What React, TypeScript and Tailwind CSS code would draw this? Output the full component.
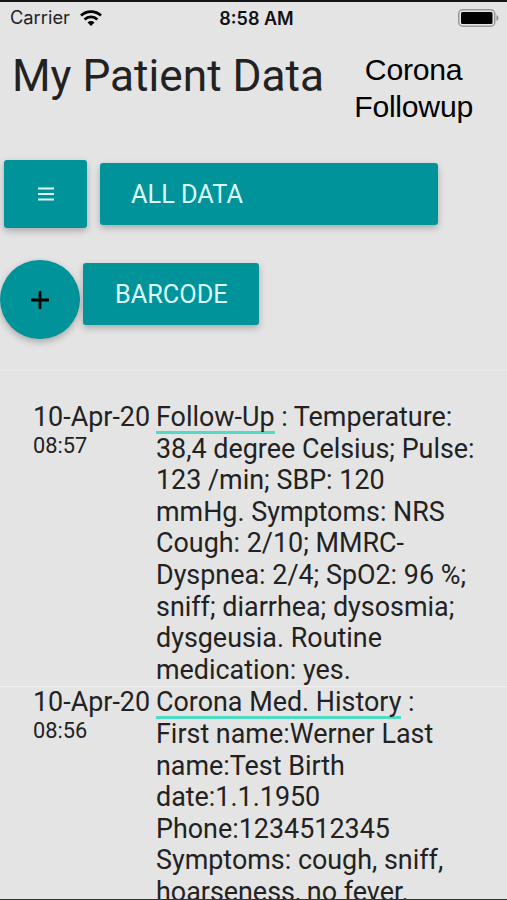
import type { ReactNode } from "react";

type Entry = {
  date: string;
  time: string;
  title: string;
  lines: readonly string[];
};

const entries: readonly Entry[] = [
  {
    date: "10-Apr-20",
    time: "08:57",
    title: "Follow-Up",
    lines: [
      ": Temperature:",
      "38,4 degree Celsius; Pulse:",
      "123 /min; SBP: 120",
      "mmHg. Symptoms: NRS",
      "Cough: 2/10; MMRC-",
      "Dyspnea: 2/4; SpO2: 96 %;",
      "sniff; diarrhea; dysosmia;",
      "dysgeusia. Routine",
      "medication: yes."
    ]
  },
  {
    date: "10-Apr-20",
    time: "08:56",
    title: "Corona Med. History",
    lines: [
      ":",
      "First name:Werner Last",
      "name:Test Birth",
      "date:1.1.1950",
      "Phone:1234512345",
      "Symptoms: cough, sniff,",
      "hoarseness, no fever."
    ]
  }
];

function StatusBar() {
  return (
    <div className="grid h-[36px] shrink-0 grid-cols-3 items-center border-t-2 border-[#151515] pr-[8px] pb-[2px] pl-[10px] font-[Inter,sans-serif] text-[18px] text-[#111]">
      <div className="flex items-center gap-[10px]">
        <span className="text-[18.3px] text-[#222]">Carrier</span>
        <svg width="22" height="16" viewBox="0 0 22 16" aria-hidden="true">
          <path
            d="M1 5.600a14.500 14.500 0 0 1 20 0M4.600 9.400a9.300 9.300 0 0 1 12.800 0"
            fill="none"
            stroke="#000"
            strokeWidth="2.800"
          />
          <path d="M11 16l-3.500-3.600a5 5 0 0 1 7 0z" fill="#000" />
        </svg>
      </div>
      <span className="pl-1 text-center font-semibold">8:58 AM</span>
      <svg className="justify-self-end" width="41" height="18" viewBox="0 0 41 18" aria-hidden="true">
        <rect x="0.750" y="0.750" width="36" height="16.500" rx="4" fill="none" stroke="#999" strokeWidth="1.500" />
        <rect x="3" y="3" width="31.500" height="12" rx="1.500" fill="#000" />
        <path d="M38.500 6c2.500 1 2.500 5 0 6z" fill="#888" />
      </svg>
    </div>
  );
}

function TealButton({ className, children }: { className: string; children: ReactNode }) {
  return (
    <button
      className={`flex items-center bg-[#00939a] text-[25.300px] text-[#dcfafa] shadow-[0_3px_7px_rgba(0,0,0,0.26)] ${className}`}
    >
      {children}
    </button>
  );
}

export default function App() {
  return (
    <div className="flex h-[900px] w-[507px] flex-col overflow-hidden border-b border-[#333] bg-[#e4e4e4] font-[Roboto,sans-serif] text-[#222]">
      <StatusBar />

      <header className="flex h-[124px] shrink-0 justify-between pr-[34px] pl-3">
        <h1 className="mt-[14px] text-[44.200px] leading-[52px] whitespace-nowrap">My Patient Data</h1>
        <p className="mt-[15px] text-center font-['Liberation_Sans',sans-serif] text-[30.200px] leading-[37px] tracking-[-0.25px] text-black">
          Corona
          <br />
          Followup
        </p>
      </header>

      <div className="flex h-[100px] shrink-0 items-start gap-[13px] pl-1">
        <TealButton className="h-[68px] w-[83px] justify-center rounded-[3px]">
          <svg width="16" height="14" viewBox="0 0 16 14" aria-hidden="true">
            <path d="M0 1.500h16M0 7h16M0 12.500h16" stroke="#dcfafa" strokeWidth="2" />
          </svg>
        </TealButton>
        <TealButton className="mt-[3px] h-[62px] w-[338px] rounded-[3px] pt-[2px] pl-[31px]">ALL DATA</TealButton>
      </div>

      <div className="flex h-[111px] shrink-0 items-start gap-[3px] border-b border-[#e9e9e9]">
        <TealButton className="h-[79px] w-[80px] justify-center rounded-full">
          <svg width="18" height="18" viewBox="0 0 18 18" aria-hidden="true">
            <path d="M0 9h18M9 0v18" stroke="#000" strokeWidth="2.800" />
          </svg>
        </TealButton>
        <TealButton className="mt-[3px] h-[62px] w-[176px] rounded-[3px] pt-[2px] pl-8">BARCODE</TealButton>
      </div>

      <main className="shrink-0 pt-[31px]">
        {entries.map((entry) => (
          <section
            key={entry.time}
            className="flex border-b border-[#f0f0f0] pl-[33px] text-[26.900px] leading-[31.600px]"
          >
            <div className="w-[123px] shrink-0">
              <p className="whitespace-nowrap">{entry.date}</p>
              <p className="text-[21.800px] leading-6">{entry.time}</p>
            </div>
            <div className="whitespace-nowrap">
              {entry.lines.map((line, i) => (
                <p key={line}>
                  {i === 0 && (
                    <>
                      <span className="inline-block h-[31.600px] border-b-[3px] border-[#50dcc4] align-top">
                        {entry.title}
                      </span>{" "}
                    </>
                  )}
                  {line}
                </p>
              ))}
            </div>
          </section>
        ))}
      </main>
    </div>
  );
}
